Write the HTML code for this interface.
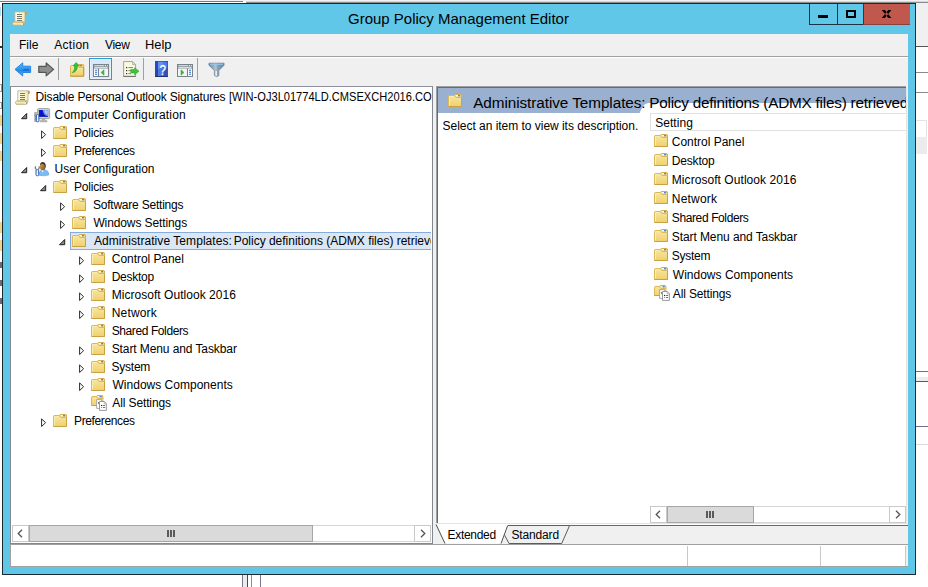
<!DOCTYPE html>
<html><head><meta charset="utf-8"><title>Group Policy Management Editor</title>
<style>
html,body{margin:0;padding:0}
body{width:928px;height:587px;overflow:hidden;background:#fff;position:relative;font-family:"Liberation Sans", sans-serif;font-size:12px;color:#000}
div,span,svg{position:absolute;box-sizing:border-box}
.ic{overflow:visible}
.t{white-space:nowrap;line-height:14px;height:14px;transform-origin:0 0}
.sep{width:1px;background:#a0a0a0}
</style></head><body>
<svg width="0" height="0" style="left:0;top:0"><defs>
<linearGradient id="fg" x1="0" y1="0" x2="0" y2="1"><stop offset="0" stop-color="#f8e6a0"/><stop offset="1" stop-color="#efd06c"/></linearGradient>
<linearGradient id="sg" x1="0" y1="0" x2="1" y2="0"><stop offset="0" stop-color="#fffde6"/><stop offset="1" stop-color="#f6eaa6"/></linearGradient>
<linearGradient id="ug" x1="0" y1="0" x2="1" y2="1"><stop offset="0" stop-color="#d8ac58"/><stop offset="1" stop-color="#7c4c1c"/></linearGradient>
</defs></svg>

<div style="left:0;top:0;width:928px;height:1px;background:#f2f2f2"></div>
<div style="left:0;top:1px;width:243px;height:1px;background:#77778f"></div>
<div style="left:246px;top:1px;width:682px;height:1px;background:#d8d8d8"></div>
<div style="left:246px;top:2px;width:682px;height:1px;background:#8c8c8c"></div>
<div style="left:916px;top:3px;width:12px;height:43px;background:#f0f0f0"></div>
<div style="left:916px;top:46px;width:12px;height:1px;background:#555"></div>
<div style="left:916px;top:72px;width:12px;height:1px;background:#8a8a8a"></div>
<div style="left:916px;top:92px;width:12px;height:1px;background:#8a8a8a"></div>
<div style="left:916px;top:120px;width:11px;height:34px;background:#fff;border:1px solid #e3e3e3;border-left:0"></div>
<div style="left:916px;top:137px;width:11px;height:17px;background:#ececec"></div>
<div style="left:916px;top:371px;width:12px;height:1px;background:#6f6f88"></div>
<div style="left:916px;top:377px;width:12px;height:4px;background:#ededed"></div>
<div style="left:916px;top:381px;width:12px;height:1px;background:#5a5a5a"></div>
<div style="left:916px;top:426px;width:12px;height:1px;background:#6f6f88"></div>
<div style="left:916px;top:444px;width:12px;height:1px;background:#dcdcdc"></div>
<div style="left:242px;top:575px;width:1px;height:12px;background:#77778f"></div>
<div style="left:243px;top:575px;width:4px;height:12px;background:#ececec"></div>
<div style="left:247px;top:575px;width:1px;height:12px;background:#4a4a4a"></div>
<div style="left:251px;top:575px;width:1px;height:12px;background:#8c8c8c"></div>
<div style="left:260px;top:575px;width:1px;height:12px;background:#77778f"></div>
<div style="left:0;top:115px;width:2px;height:11px;background:#efd48a"></div>
<div style="left:0;top:133px;width:2px;height:11px;background:#efd48a"></div>
<div style="left:0;top:151px;width:2px;height:10px;background:#efd48a"></div>
<div style="left:0;top:222px;width:2px;height:11px;background:#efd48a"></div>
<div style="left:0;top:240px;width:2px;height:11px;background:#efd48a"></div>
<div style="left:0;top:262px;width:2px;height:6px;background:#6a6a78"></div>
<div style="left:0;top:280px;width:2px;height:6px;background:#6a6a78"></div>
<div style="left:0;top:298px;width:2px;height:6px;background:#6a6a78"></div>
<div style="left:0;top:84px;width:2px;height:8px;border:1px solid #9a9a9a;border-left:0"></div>
<div style="left:0;top:102px;width:2px;height:7px;border:1px solid #9a9a9a;border-left:0"></div>
<div style="left:0;top:7px;width:1px;height:9px;background:#a8dcf4"></div>
<div style="left:0;top:46px;width:2px;height:2px;background:#333"></div>
<div id="win" style="left:2px;top:3px;width:914px;height:572px;background:#60c7e8;border:1px solid #1d2a33"></div>
<svg class="ic" style="left:12px;top:11px" width="15" height="15" viewBox="0 0 15 15">
<path d="M2.8 .8 H13.6 Q15.2 1 14.4 3 L13 4.4 V11.2 H2.8Z" fill="url(#sg)" stroke="#a9a9a0" stroke-width=".8"/>
<path d="M12.6 1 Q15.4 .6 14.4 3.2 L13 4.4Z" fill="#c89a48"/>
<path d="M1.2 11 Q-.4 12.8 1.4 14.4 H10.5 Q12.6 14.2 12.6 11.6 L12.4 11 H3 Z" fill="#f8efbf" stroke="#b7a877" stroke-width=".8"/>
<path d="M1 13.3 H9" stroke="#efcf7e" stroke-width=".9"/>
<path d="M3 11.4 H12.4" stroke="#dcc07a" stroke-width=".8"/>
<path d="M10.3 11.4 Q12.3 12 11.6 14.2" fill="none" stroke="#8c8c8c" stroke-width=".8"/>
<path d="M5 3.5H10M5 5.5H10M5 7.5H10M5 9.5H10" stroke="#767676" stroke-width="1"/>
</svg>
<span class="t" style="left:348.00px;top:10px;font-size:15px;line-height:18px;height:18px;">Group Policy Management Editor</span>
<div style="left:809px;top:4px;width:55px;height:21px;border:1px solid #1d3540;border-top:0;border-right:0"></div>
<div style="left:837px;top:4px;width:1px;height:20px;background:#1d3540"></div>
<div style="left:863px;top:4px;width:47px;height:21px;background:#c1584e;border-left:1px solid #5a2a26;border-bottom:1px solid #8e3f39"></div>
<div style="left:818px;top:15px;width:10px;height:3px;background:#000"></div>
<div style="left:846px;top:10px;width:10px;height:8px;border:2px solid #000;border-top-width:2px"></div>
<svg class="ic" style="left:881px;top:10px" width="11" height="9" viewBox="0 0 11 9"><path d="M.8 0 H3.9 L10.4 8 H7.3Z M10.4 0 H7.3 L.8 8 H3.9Z" fill="#000"/></svg>
<div id="client" style="left:10px;top:34px;width:898px;height:533px;background:#f0f0f0"></div>
<span class="t" style="left:19.00px;top:38px;">File</span>
<span class="t" style="left:54.20px;top:38px;letter-spacing:0.300px;">Action</span>
<span class="t" style="left:105.00px;top:38px;letter-spacing:-0.333px;">View</span>
<span class="t" style="left:144.93px;top:38px;transform:scaleX(1.0739);">Help</span>
<div style="left:10px;top:56px;width:898px;height:1px;background:#a0a0a0"></div>
<div style="left:10px;top:57px;width:898px;height:1px;background:#fff"></div>
<svg class="ic" style="left:14px;top:62px" width="18" height="15" viewBox="0 0 18 15">
<defs><linearGradient id="ba" x1="0" y1="0" x2="0" y2="1"><stop offset="0" stop-color="#58b8f6"/><stop offset=".45" stop-color="#2c9cf0"/><stop offset=".55" stop-color="#2488e6"/><stop offset="1" stop-color="#4cb2f6"/></linearGradient></defs>
<path d="M1 7.4 L8.7 .8 V4.2 H16.6 V10.5 H8.7 V14Z" fill="url(#ba)" stroke="#2a86e2" stroke-width="1" stroke-linejoin="round"/>
<path d="M10 6.8 H15 V9 H8.5Z" fill="#1466d8" opacity=".75"/></svg>
<svg class="ic" style="left:38px;top:62px" width="17" height="15" viewBox="0 0 17 15">
<path d="M15.6 7.4 L8.2 .9 V4.3 H.8 V10.4 H8.2 V13.9Z" fill="#8a9090" stroke="#545454" stroke-width="1.2" stroke-linejoin="round"/></svg>
<div class="sep" style="left:58px;top:58px;height:22px"></div>
<svg class="ic" style="left:70px;top:62px" width="15" height="15" viewBox="0 0 15 15">
<path d="M8 3.2 L8.7 2.5 H13.2 L13.7 3 V6 H8Z" fill="#f2d98c" stroke="#d6ae50"/>
<rect x="9.6" y="3" width="2.2" height="1.2" fill="#3d8fe6"/>
<path d="M.5 4 L1 3.5 H7.6 L9 5.2 H13.7 V14.2 H.5Z" fill="url(#fg)" stroke="#d9b656"/>
<path d="M.5 14.2 H13.7 V5.5" fill="none" stroke="#c39a3e"/>
<path d="M2.3 10.6 Q3.6 9.6 4.4 7.4 Q4.9 5.6 4.4 4.2 L3.2 3.6 L6.2 .5 L8.8 3.6 L7.4 3.7 Q7.6 6.4 6.2 8.4 Q4.8 10.4 2.3 10.6Z" fill="#34c234" stroke="#1f9a24" stroke-width=".6"/></svg>
<div style="left:89px;top:58px;width:23.4px;height:22px;background:#d9e8f8;border:1px solid #2a9ad8;box-shadow:inset 0 0 0 1px #e6f1fb"></div>
<svg class="ic" style="left:93px;top:64px" width="16" height="13" viewBox="0 0 16 13">
<rect x=".5" y=".5" width="15" height="12" fill="#fff" stroke="#76858c"/>
<rect x="1" y="1" width="14" height="3.6" fill="#8e9aa0"/>
<path d="M1.5 1.7H11" stroke="#e8ecee" stroke-width=".9"/><path d="M1.5 3.6H14.5" stroke="#e8ecee" stroke-width=".9"/>
<path d="M12 1.7h1M14 1.7h.8" stroke="#fff" stroke-width="1"/>
<path d="M5.6 4.6V12.5" stroke="#76858c" stroke-width="1.2"/>
<path d="M2 6.2h2.2M2 8.2h2.2M2 10.2h2.2" stroke="#2f6fe0" stroke-width="1.1"/>
<rect x="6.3" y="5" width="8.7" height="7" fill="#f4f4f4"/>
<path d="M11 5.8 V11.2 L8 8.5Z" fill="#3cc03c" stroke="#2a9a2a" stroke-width=".5"/></svg>
<svg class="ic" style="left:123px;top:61px" width="17" height="16" viewBox="0 0 17 16">
<path d="M.6 .6 H9.6 L12.6 3.6 V15.4 H.6Z" fill="#fbfadc" stroke="#a2a2a2"/>
<path d="M.4 15.4 H12.8" stroke="#6e6e6e" stroke-width="1"/>
<path d="M9.6 .6 V3.6 H12.6Z" fill="#f0f0e8" stroke="#a2a2a2" stroke-width=".8"/>
<rect x="3" y="6" width="1.2" height="1.2" fill="#2a2a3a"/><rect x="3" y="9" width="1.2" height="1.2" fill="#2a2a3a"/><rect x="3" y="12" width="1.2" height="1.2" fill="#2a2a3a"/>
<path d="M5.4 6.6H10M5.4 9.6H8M5.4 12.6H8" stroke="#7a8088" stroke-width="1"/>
<path d="M7.8 8.6 H11.6 V6.7 L16 10.2 L11.6 13.8 V11.9 H7.8Z" fill="#3cc43c" stroke="#2aa82a" stroke-width=".6"/></svg>
<div class="sep" style="left:143px;top:58px;height:22px"></div>
<svg class="ic" style="left:155px;top:61px" width="13" height="16" viewBox="0 0 13 16">
<rect x="0" y="0" width="13" height="16" fill="#2448d0"/>
<rect x="0" y="9" width="3" height="7" fill="#34468c"/>
<rect x="3" y=".8" width="9.4" height="14.4" fill="#4a78e4"/>
<path d="M3 .8 H9 L3 9Z" fill="#6c98ec" opacity=".8"/>
<path d="M12.4 6 V15.2 H6Z" fill="#3444a4" opacity=".8"/>
<rect x="0" y="15.2" width="13" height=".8" fill="#1c2c6c"/>
<text x="7.6" y="13.6" font-family="Liberation Sans, sans-serif" font-size="15" fill="#fff" stroke="#fff" stroke-width=".3" text-anchor="middle" textLength="6.4" lengthAdjust="spacingAndGlyphs">?</text></svg>
<svg class="ic" style="left:177px;top:64px" width="16" height="13" viewBox="0 0 16 13">
<rect x=".5" y=".5" width="15" height="12" fill="#fff" stroke="#76858c"/>
<rect x="1" y="1" width="14" height="3.6" fill="#8e9aa0"/>
<path d="M1.5 1.7H11" stroke="#e8ecee" stroke-width=".9"/><path d="M1.5 3.6H14.5" stroke="#e8ecee" stroke-width=".9"/>
<path d="M12 1.7h1M14 1.7h.8" stroke="#fff" stroke-width="1"/>
<path d="M10.4 4.6V12.5" stroke="#76858c" stroke-width="1.2"/>
<path d="M11.9 6.2h2.2M11.9 8.2h2.2M11.9 10.2h2.2" stroke="#2f6fe0" stroke-width="1.1"/>
<rect x="1" y="5" width="8.7" height="7" fill="#f4f4f4"/>
<path d="M4 5.8 V11.2 L7 8.5Z" fill="#3cc03c" stroke="#2a9a2a" stroke-width=".5"/></svg>
<div class="sep" style="left:197px;top:58px;height:22px"></div>
<svg class="ic" style="left:208px;top:62px" width="17" height="16" viewBox="0 0 17 16">
<defs><linearGradient id="fu" x1="0" y1="0" x2="1" y2="0"><stop offset="0" stop-color="#6f879f"/><stop offset=".45" stop-color="#b4c2d0"/><stop offset=".6" stop-color="#8a9db2"/><stop offset="1" stop-color="#6b8299"/></linearGradient></defs>
<path d="M.9 1.2 H16.1 V3.2 L10.8 8.6 V13.6 Q8.6 15.6 6.4 13.6 V8.6 L.9 3.2Z" fill="url(#fu)" stroke="#6a8098" stroke-width=".7"/>
<path d="M2 2.3 H15" stroke="#8fd0f4" stroke-width=".9"/>
<path d="M8.2 9 V13.8" stroke="#f2f6fa" stroke-width="1.3"/></svg>
<div id="tree" style="left:10px;top:86px;width:423px;height:458px;background:#fff;border:1px solid #828790;border-top-color:#8e8f9f;overflow:hidden"></div>
<div style="left:70px;top:232px;width:361px;height:18px;background:#dbe7f5;border:1px solid #86abdc;border-right:0"></div>
<svg class="ic" style="left:15px;top:90px" width="15" height="15" viewBox="0 0 15 15">
<path d="M2.8 .8 H13.6 Q15.2 1 14.4 3 L13 4.4 V11.2 H2.8Z" fill="url(#sg)" stroke="#a9a9a0" stroke-width=".8"/>
<path d="M12.6 1 Q15.4 .6 14.4 3.2 L13 4.4Z" fill="#c89a48"/>
<path d="M1.2 11 Q-.4 12.8 1.4 14.4 H10.5 Q12.6 14.2 12.6 11.6 L12.4 11 H3 Z" fill="#f8efbf" stroke="#b7a877" stroke-width=".8"/>
<path d="M1 13.3 H9" stroke="#efcf7e" stroke-width=".9"/>
<path d="M3 11.4 H12.4" stroke="#dcc07a" stroke-width=".8"/>
<path d="M10.3 11.4 Q12.3 12 11.6 14.2" fill="none" stroke="#8c8c8c" stroke-width=".8"/>
<path d="M5 3.5H10M5 5.5H10M5 7.5H10M5 9.5H10" stroke="#767676" stroke-width="1"/>
</svg>
<span class="t" style="left:35.60px;top:90px;letter-spacing:-0.182px;">Disable Personal Outlook Signatures</span>
<span class="t" style="left:228.78px;top:90px;width:220.08px;overflow:hidden;transform:scaleX(0.9234);">[WIN-OJ3L01774LD.CMSEXCH2016.CO</span>
<svg class="ic" style="left:20.7px;top:112.7px" width="7" height="7" viewBox="0 0 7 7"><path d="M5.7 .5 V5.7 H.5Z" fill="#8a8a8a" stroke="#222" stroke-width="1" stroke-linejoin="miter"/></svg>
<svg class="ic" style="left:34px;top:108px" width="16" height="14" viewBox="0 0 16 14">
<rect x="3.6" y=".6" width="12" height="10" rx="1" fill="#d7d6ce" stroke="#a3a39c"/>
<rect x="4.9" y="2" width="9.2" height="6.9" fill="#0a14c4"/>
<path d="M8.6 2 H14.1 V8.2 Q10 8.6 8.6 2Z" fill="#6f9af0"/>
<path d="M10.4 2.6 H13.6 V6.6 Q11.4 6.4 10.4 2.6Z" fill="#b4d0fa"/>
<path d="M8 10.6 h3 l.6 2 h-4.2Z" fill="#b3b3b0"/>
<rect x="5.8" y="12.4" width="7.4" height="1.5" rx=".6" fill="#c2c2be" stroke="#95958f" stroke-width=".5"/>
<rect x=".3" y="4.2" width="3.2" height="9.6" fill="#a2a2a0"/>
<path d="M2.2 4.3 L3.4 5.8 L4.8 4.3 L4.4 6.6 H2.4Z" fill="#f4f4f4" stroke="#9c9c9c" stroke-width=".4"/>
<rect x="2.3" y="6.6" width="2.6" height="7.2" rx="1.2" fill="#f2f6fc" stroke="#2a58b4" stroke-width="1"/>
<rect x=".4" y="7" width=".9" height=".9" fill="#49c04a"/>
</svg>
<span class="t" style="left:54.60px;top:108px;letter-spacing:0.176px;">Computer Configuration</span>
<svg class="ic" style="left:40.9px;top:129.8px" width="6" height="10" viewBox="0 0 6 10"><path d="M.6 .9 L4.6 4.7 L.6 8.5Z" fill="#fff" stroke="#2b2b2b" stroke-width="1"/></svg>
<svg class="ic" style="left:53px;top:126px" width="14" height="13" viewBox="0 0 14 13">
<path d="M6.5 1.2 L7.2 .5 H13 L13.5 1 V4 H6.5Z" fill="#f2d98c" stroke="#d6ae50"/>
<rect x="7.7" y="1" width="2.3" height="1.3" fill="#fff"/><rect x="10" y="1" width="2.1" height="1.3" fill="#3d8fe6"/>
<path d="M.5 2 L1 1.5 H6.3 L8 3.5 H13.5 V12.5 H.5Z" fill="url(#fg)" stroke="#dab95c"/>
<path d="M.5 12.5 H13.5 V4" fill="none" stroke="#c9a044"/>
<path d="M1.5 11.5 V2.6 H5.8" fill="none" stroke="#fbefb6" stroke-width=".9"/>
</svg>
<span class="t" style="left:74.00px;top:126px;letter-spacing:-0.214px;">Policies</span>
<svg class="ic" style="left:40.9px;top:147.8px" width="6" height="10" viewBox="0 0 6 10"><path d="M.6 .9 L4.6 4.7 L.6 8.5Z" fill="#fff" stroke="#2b2b2b" stroke-width="1"/></svg>
<svg class="ic" style="left:53px;top:144px" width="14" height="13" viewBox="0 0 14 13">
<path d="M6.5 1.2 L7.2 .5 H13 L13.5 1 V4 H6.5Z" fill="#f2d98c" stroke="#d6ae50"/>
<rect x="7.7" y="1" width="2.3" height="1.3" fill="#fff"/><rect x="10" y="1" width="2.1" height="1.3" fill="#3d8fe6"/>
<path d="M.5 2 L1 1.5 H6.3 L8 3.5 H13.5 V12.5 H.5Z" fill="url(#fg)" stroke="#dab95c"/>
<path d="M.5 12.5 H13.5 V4" fill="none" stroke="#c9a044"/>
<path d="M1.5 11.5 V2.6 H5.8" fill="none" stroke="#fbefb6" stroke-width=".9"/>
</svg>
<span class="t" style="left:74.00px;top:144px;letter-spacing:-0.370px;">Preferences</span>
<svg class="ic" style="left:20.7px;top:166.7px" width="7" height="7" viewBox="0 0 7 7"><path d="M5.7 .5 V5.7 H.5Z" fill="#8a8a8a" stroke="#222" stroke-width="1" stroke-linejoin="miter"/></svg>
<svg class="ic" style="left:34px;top:162px" width="15" height="14" viewBox="0 0 15 14">
<path d="M5.4 13.4 Q5 8 9 7.6 Q15 8 14.8 13 Q10 14.4 5.4 13.4Z" fill="#7dbcf2" stroke="#5e9fe0" stroke-width=".6"/>
<path d="M7.4 8.2 L8.6 10.4 L10 8Z" fill="#fff"/>
<ellipse cx="8.7" cy="4.4" rx="2.8" ry="3.9" fill="url(#ug)"/>
<path d="M6 3.4 Q6.2 .1 9 .1 Q12.2 .4 11.6 5.2 Q11 6.6 10.9 4.6 Q10.6 2 8.8 2 Q6.8 1.9 6 3.4Z" fill="#3a3a3c"/>
<path d="M1.6 4.3 Q.6 6.4 2.6 7.8 M5 4.3 Q6 6.4 4 7.8" fill="none" stroke="#7d7d7d" stroke-width="1.2"/>
<rect x="2" y="7.6" width="2.7" height="6.2" rx="1.2" fill="#f2f6fc" stroke="#2a58b4" stroke-width="1"/>
</svg>
<span class="t" style="left:54.60px;top:162px;letter-spacing:-0.006px;">User Configuration</span>
<svg class="ic" style="left:39.7px;top:184.7px" width="7" height="7" viewBox="0 0 7 7"><path d="M5.7 .5 V5.7 H.5Z" fill="#8a8a8a" stroke="#222" stroke-width="1" stroke-linejoin="miter"/></svg>
<svg class="ic" style="left:53px;top:180px" width="14" height="13" viewBox="0 0 14 13">
<path d="M6.5 1.2 L7.2 .5 H13 L13.5 1 V4 H6.5Z" fill="#f2d98c" stroke="#d6ae50"/>
<rect x="7.7" y="1" width="2.3" height="1.3" fill="#fff"/><rect x="10" y="1" width="2.1" height="1.3" fill="#3d8fe6"/>
<path d="M.5 2 L1 1.5 H6.3 L8 3.5 H13.5 V12.5 H.5Z" fill="url(#fg)" stroke="#dab95c"/>
<path d="M.5 12.5 H13.5 V4" fill="none" stroke="#c9a044"/>
<path d="M1.5 11.5 V2.6 H5.8" fill="none" stroke="#fbefb6" stroke-width=".9"/>
</svg>
<span class="t" style="left:74.00px;top:180px;letter-spacing:-0.214px;">Policies</span>
<svg class="ic" style="left:59.9px;top:201.8px" width="6" height="10" viewBox="0 0 6 10"><path d="M.6 .9 L4.6 4.7 L.6 8.5Z" fill="#fff" stroke="#2b2b2b" stroke-width="1"/></svg>
<svg class="ic" style="left:72px;top:198px" width="14" height="13" viewBox="0 0 14 13">
<path d="M6.5 1.2 L7.2 .5 H13 L13.5 1 V4 H6.5Z" fill="#f2d98c" stroke="#d6ae50"/>
<rect x="7.7" y="1" width="2.3" height="1.3" fill="#fff"/><rect x="10" y="1" width="2.1" height="1.3" fill="#3d8fe6"/>
<path d="M.5 2 L1 1.5 H6.3 L8 3.5 H13.5 V12.5 H.5Z" fill="url(#fg)" stroke="#dab95c"/>
<path d="M.5 12.5 H13.5 V4" fill="none" stroke="#c9a044"/>
<path d="M1.5 11.5 V2.6 H5.8" fill="none" stroke="#fbefb6" stroke-width=".9"/>
</svg>
<span class="t" style="left:92.90px;top:198px;letter-spacing:-0.213px;">Software Settings</span>
<svg class="ic" style="left:59.9px;top:219.8px" width="6" height="10" viewBox="0 0 6 10"><path d="M.6 .9 L4.6 4.7 L.6 8.5Z" fill="#fff" stroke="#2b2b2b" stroke-width="1"/></svg>
<svg class="ic" style="left:72px;top:216px" width="14" height="13" viewBox="0 0 14 13">
<path d="M6.5 1.2 L7.2 .5 H13 L13.5 1 V4 H6.5Z" fill="#f2d98c" stroke="#d6ae50"/>
<rect x="7.7" y="1" width="2.3" height="1.3" fill="#fff"/><rect x="10" y="1" width="2.1" height="1.3" fill="#3d8fe6"/>
<path d="M.5 2 L1 1.5 H6.3 L8 3.5 H13.5 V12.5 H.5Z" fill="url(#fg)" stroke="#dab95c"/>
<path d="M.5 12.5 H13.5 V4" fill="none" stroke="#c9a044"/>
<path d="M1.5 11.5 V2.6 H5.8" fill="none" stroke="#fbefb6" stroke-width=".9"/>
</svg>
<span class="t" style="left:93.40px;top:216px;letter-spacing:-0.107px;">Windows Settings</span>
<svg class="ic" style="left:58.7px;top:238.7px" width="7" height="7" viewBox="0 0 7 7"><path d="M5.7 .5 V5.7 H.5Z" fill="#8a8a8a" stroke="#222" stroke-width="1" stroke-linejoin="miter"/></svg>
<svg class="ic" style="left:72px;top:234px" width="14" height="13" viewBox="0 0 14 13">
<path d="M6.5 1.2 L7.2 .5 H13 L13.5 1 V4 H6.5Z" fill="#f2d98c" stroke="#d6ae50"/>
<rect x="7.7" y="1" width="2.3" height="1.3" fill="#fff"/><rect x="10" y="1" width="2.1" height="1.3" fill="#3d8fe6"/>
<path d="M.5 2 L1 1.5 H6.3 L8 3.5 H13.5 V12.5 H.5Z" fill="url(#fg)" stroke="#dab95c"/>
<path d="M.5 12.5 H13.5 V4" fill="none" stroke="#c9a044"/>
<path d="M1.5 11.5 V2.6 H5.8" fill="none" stroke="#fbefb6" stroke-width=".9"/>
</svg>
<span class="t" style="left:93.90px;top:234px;letter-spacing:0.062px;">Administrative Templates:</span>
<span class="t" style="left:233.70px;top:234px;letter-spacing:-0.011px;width:197.30px;overflow:hidden;">Policy definitions (ADMX files) retrieved</span>
<svg class="ic" style="left:78.9px;top:255.8px" width="6" height="10" viewBox="0 0 6 10"><path d="M.6 .9 L4.6 4.7 L.6 8.5Z" fill="#fff" stroke="#2b2b2b" stroke-width="1"/></svg>
<svg class="ic" style="left:91px;top:252px" width="14" height="13" viewBox="0 0 14 13">
<path d="M6.5 1.2 L7.2 .5 H13 L13.5 1 V4 H6.5Z" fill="#f2d98c" stroke="#d6ae50"/>
<rect x="7.7" y="1" width="2.3" height="1.3" fill="#fff"/><rect x="10" y="1" width="2.1" height="1.3" fill="#3d8fe6"/>
<path d="M.5 2 L1 1.5 H6.3 L8 3.5 H13.5 V12.5 H.5Z" fill="url(#fg)" stroke="#dab95c"/>
<path d="M.5 12.5 H13.5 V4" fill="none" stroke="#c9a044"/>
<path d="M1.5 11.5 V2.6 H5.8" fill="none" stroke="#fbefb6" stroke-width=".9"/>
</svg>
<span class="t" style="left:111.80px;top:252px;letter-spacing:-0.050px;">Control Panel</span>
<svg class="ic" style="left:78.9px;top:273.8px" width="6" height="10" viewBox="0 0 6 10"><path d="M.6 .9 L4.6 4.7 L.6 8.5Z" fill="#fff" stroke="#2b2b2b" stroke-width="1"/></svg>
<svg class="ic" style="left:91px;top:270px" width="14" height="13" viewBox="0 0 14 13">
<path d="M6.5 1.2 L7.2 .5 H13 L13.5 1 V4 H6.5Z" fill="#f2d98c" stroke="#d6ae50"/>
<rect x="7.7" y="1" width="2.3" height="1.3" fill="#fff"/><rect x="10" y="1" width="2.1" height="1.3" fill="#3d8fe6"/>
<path d="M.5 2 L1 1.5 H6.3 L8 3.5 H13.5 V12.5 H.5Z" fill="url(#fg)" stroke="#dab95c"/>
<path d="M.5 12.5 H13.5 V4" fill="none" stroke="#c9a044"/>
<path d="M1.5 11.5 V2.6 H5.8" fill="none" stroke="#fbefb6" stroke-width=".9"/>
</svg>
<span class="t" style="left:111.70px;top:270px;letter-spacing:-0.250px;">Desktop</span>
<svg class="ic" style="left:78.9px;top:291.8px" width="6" height="10" viewBox="0 0 6 10"><path d="M.6 .9 L4.6 4.7 L.6 8.5Z" fill="#fff" stroke="#2b2b2b" stroke-width="1"/></svg>
<svg class="ic" style="left:91px;top:288px" width="14" height="13" viewBox="0 0 14 13">
<path d="M6.5 1.2 L7.2 .5 H13 L13.5 1 V4 H6.5Z" fill="#f2d98c" stroke="#d6ae50"/>
<rect x="7.7" y="1" width="2.3" height="1.3" fill="#fff"/><rect x="10" y="1" width="2.1" height="1.3" fill="#3d8fe6"/>
<path d="M.5 2 L1 1.5 H6.3 L8 3.5 H13.5 V12.5 H.5Z" fill="url(#fg)" stroke="#dab95c"/>
<path d="M.5 12.5 H13.5 V4" fill="none" stroke="#c9a044"/>
<path d="M1.5 11.5 V2.6 H5.8" fill="none" stroke="#fbefb6" stroke-width=".9"/>
</svg>
<span class="t" style="left:111.70px;top:288px;letter-spacing:0.038px;">Microsoft Outlook 2016</span>
<svg class="ic" style="left:78.9px;top:309.8px" width="6" height="10" viewBox="0 0 6 10"><path d="M.6 .9 L4.6 4.7 L.6 8.5Z" fill="#fff" stroke="#2b2b2b" stroke-width="1"/></svg>
<svg class="ic" style="left:91px;top:306px" width="14" height="13" viewBox="0 0 14 13">
<path d="M6.5 1.2 L7.2 .5 H13 L13.5 1 V4 H6.5Z" fill="#f2d98c" stroke="#d6ae50"/>
<rect x="7.7" y="1" width="2.3" height="1.3" fill="#fff"/><rect x="10" y="1" width="2.1" height="1.3" fill="#3d8fe6"/>
<path d="M.5 2 L1 1.5 H6.3 L8 3.5 H13.5 V12.5 H.5Z" fill="url(#fg)" stroke="#dab95c"/>
<path d="M.5 12.5 H13.5 V4" fill="none" stroke="#c9a044"/>
<path d="M1.5 11.5 V2.6 H5.8" fill="none" stroke="#fbefb6" stroke-width=".9"/>
</svg>
<span class="t" style="left:111.70px;top:306px;letter-spacing:0.183px;">Network</span>
<svg class="ic" style="left:91px;top:324px" width="14" height="13" viewBox="0 0 14 13">
<path d="M6.5 1.2 L7.2 .5 H13 L13.5 1 V4 H6.5Z" fill="#f2d98c" stroke="#d6ae50"/>
<rect x="7.7" y="1" width="2.3" height="1.3" fill="#fff"/><rect x="10" y="1" width="2.1" height="1.3" fill="#3d8fe6"/>
<path d="M.5 2 L1 1.5 H6.3 L8 3.5 H13.5 V12.5 H.5Z" fill="url(#fg)" stroke="#dab95c"/>
<path d="M.5 12.5 H13.5 V4" fill="none" stroke="#c9a044"/>
<path d="M1.5 11.5 V2.6 H5.8" fill="none" stroke="#fbefb6" stroke-width=".9"/>
</svg>
<span class="t" style="left:111.70px;top:324px;letter-spacing:-0.400px;">Shared Folders</span>
<svg class="ic" style="left:78.9px;top:345.8px" width="6" height="10" viewBox="0 0 6 10"><path d="M.6 .9 L4.6 4.7 L.6 8.5Z" fill="#fff" stroke="#2b2b2b" stroke-width="1"/></svg>
<svg class="ic" style="left:91px;top:342px" width="14" height="13" viewBox="0 0 14 13">
<path d="M6.5 1.2 L7.2 .5 H13 L13.5 1 V4 H6.5Z" fill="#f2d98c" stroke="#d6ae50"/>
<rect x="7.7" y="1" width="2.3" height="1.3" fill="#fff"/><rect x="10" y="1" width="2.1" height="1.3" fill="#3d8fe6"/>
<path d="M.5 2 L1 1.5 H6.3 L8 3.5 H13.5 V12.5 H.5Z" fill="url(#fg)" stroke="#dab95c"/>
<path d="M.5 12.5 H13.5 V4" fill="none" stroke="#c9a044"/>
<path d="M1.5 11.5 V2.6 H5.8" fill="none" stroke="#fbefb6" stroke-width=".9"/>
</svg>
<span class="t" style="left:111.70px;top:342px;letter-spacing:-0.095px;">Start Menu and Taskbar</span>
<svg class="ic" style="left:78.9px;top:363.8px" width="6" height="10" viewBox="0 0 6 10"><path d="M.6 .9 L4.6 4.7 L.6 8.5Z" fill="#fff" stroke="#2b2b2b" stroke-width="1"/></svg>
<svg class="ic" style="left:91px;top:360px" width="14" height="13" viewBox="0 0 14 13">
<path d="M6.5 1.2 L7.2 .5 H13 L13.5 1 V4 H6.5Z" fill="#f2d98c" stroke="#d6ae50"/>
<rect x="7.7" y="1" width="2.3" height="1.3" fill="#fff"/><rect x="10" y="1" width="2.1" height="1.3" fill="#3d8fe6"/>
<path d="M.5 2 L1 1.5 H6.3 L8 3.5 H13.5 V12.5 H.5Z" fill="url(#fg)" stroke="#dab95c"/>
<path d="M.5 12.5 H13.5 V4" fill="none" stroke="#c9a044"/>
<path d="M1.5 11.5 V2.6 H5.8" fill="none" stroke="#fbefb6" stroke-width=".9"/>
</svg>
<span class="t" style="left:111.50px;top:360px;letter-spacing:-0.240px;">System</span>
<svg class="ic" style="left:78.9px;top:381.8px" width="6" height="10" viewBox="0 0 6 10"><path d="M.6 .9 L4.6 4.7 L.6 8.5Z" fill="#fff" stroke="#2b2b2b" stroke-width="1"/></svg>
<svg class="ic" style="left:91px;top:378px" width="14" height="13" viewBox="0 0 14 13">
<path d="M6.5 1.2 L7.2 .5 H13 L13.5 1 V4 H6.5Z" fill="#f2d98c" stroke="#d6ae50"/>
<rect x="7.7" y="1" width="2.3" height="1.3" fill="#fff"/><rect x="10" y="1" width="2.1" height="1.3" fill="#3d8fe6"/>
<path d="M.5 2 L1 1.5 H6.3 L8 3.5 H13.5 V12.5 H.5Z" fill="url(#fg)" stroke="#dab95c"/>
<path d="M.5 12.5 H13.5 V4" fill="none" stroke="#c9a044"/>
<path d="M1.5 11.5 V2.6 H5.8" fill="none" stroke="#fbefb6" stroke-width=".9"/>
</svg>
<span class="t" style="left:112.50px;top:378px;letter-spacing:0.012px;">Windows Components</span>
<svg class="ic" style="left:91px;top:395px" width="16" height="16" viewBox="0 0 16 16">
<path d="M5.5 1.2 L6.2 .5 H11.4 L11.9 1 V4 H5.5Z" fill="#f2d98c" stroke="#d6ae50"/>
<rect x="6.7" y="1" width="2" height="1.3" fill="#fff"/><rect x="8.6" y="1" width="2" height="1.3" fill="#3d8fe6"/>
<path d="M.5 2 L1 1.5 H5.3 L7 3.5 H11.9 V10.5 H.5Z" fill="url(#fg)" stroke="#dab95c"/>
<path d="M.5 10.5 H6" fill="none" stroke="#c9a044"/>
<path d="M5.6 4.6 H10.6 V13.4 H5.6Z" fill="#fcfcfc" stroke="#a2a2a2" stroke-width=".9"/>
<rect x="7" y="7.4" width="1.2" height="1.2" fill="#333"/>
<path d="M8.5 6.5 H13.4 L15.4 8.6 V15.4 H8.5Z" fill="#fff" stroke="#8f8f8f" stroke-width=".9"/>
<path d="M13.2 6.6 V8.8 H15.3" fill="#ededed" stroke="#9a9a9a" stroke-width=".7"/>
<rect x="10" y="9.9" width="1.2" height="1.2" fill="#222"/><rect x="10.1" y="12" width="1" height="1" fill="#8c8c8c"/>
<path d="M12 10.5H14.2M12 12.5H14.2" stroke="#5a7d7a" stroke-width="1"/>
</svg>
<span class="t" style="left:112.30px;top:396px;letter-spacing:-0.118px;">All Settings</span>
<svg class="ic" style="left:40.9px;top:417.8px" width="6" height="10" viewBox="0 0 6 10"><path d="M.6 .9 L4.6 4.7 L.6 8.5Z" fill="#fff" stroke="#2b2b2b" stroke-width="1"/></svg>
<svg class="ic" style="left:53px;top:414px" width="14" height="13" viewBox="0 0 14 13">
<path d="M6.5 1.2 L7.2 .5 H13 L13.5 1 V4 H6.5Z" fill="#f2d98c" stroke="#d6ae50"/>
<rect x="7.7" y="1" width="2.3" height="1.3" fill="#fff"/><rect x="10" y="1" width="2.1" height="1.3" fill="#3d8fe6"/>
<path d="M.5 2 L1 1.5 H6.3 L8 3.5 H13.5 V12.5 H.5Z" fill="url(#fg)" stroke="#dab95c"/>
<path d="M.5 12.5 H13.5 V4" fill="none" stroke="#c9a044"/>
<path d="M1.5 11.5 V2.6 H5.8" fill="none" stroke="#fbefb6" stroke-width=".9"/>
</svg>
<span class="t" style="left:74.00px;top:414px;letter-spacing:-0.370px;">Preferences</span>
<div style="left:12px;top:525px;width:419px;height:17px;background:#fff;border:1px solid #d6d6d6"></div><div style="left:12px;top:525px;width:17px;height:17px;background:#fff;border:1px solid #c9c9c9"></div><div style="left:414px;top:525px;width:17px;height:17px;background:#fff;border:1px solid #c9c9c9"></div><svg class="ic" style="left:17px;top:529px" width="6" height="9" viewBox="0 0 6 9"><path d="M5 .7 L1.2 4.5 L5 8.3" fill="none" stroke="#555" stroke-width="1.3"/></svg><svg class="ic" style="left:420px;top:529px" width="6" height="9" viewBox="0 0 6 9"><path d="M1 .7 L4.8 4.5 L1 8.3" fill="none" stroke="#555" stroke-width="1.3"/></svg><div style="left:29px;top:525px;width:284px;height:17px;background:#dadada;border:1px solid #a6a6a6"></div><div style="left:167px;top:530px;width:2px;height:7px;background:#5a5a5a"></div><div style="left:170px;top:530px;width:2px;height:7px;background:#5a5a5a"></div><div style="left:173px;top:530px;width:2px;height:7px;background:#5a5a5a"></div>
<div id="rp" style="left:436px;top:86px;width:470px;height:439px;background:#fff"></div>
<div style="left:436px;top:86px;width:1px;height:437px;background:#a0a0a0"></div>
<div style="left:437px;top:87px;width:1px;height:436px;background:#696969"></div>
<div style="left:436px;top:86px;width:470px;height:1px;background:#a0a0a0"></div>
<div style="left:437px;top:87px;width:469px;height:1px;background:#696969"></div>
<div style="left:906px;top:88px;width:1px;height:436px;background:#e3e3e3"></div>
<div style="left:437px;top:523px;width:470px;height:1px;background:#e3e3e3"></div>
<svg class="ic" style="left:438px;top:88px" width="468" height="26" viewBox="0 0 468 26">
<path d="M0 0 H468 V15 H210.5 C208 15.2 206 17 204.8 18.4 C203.8 20 203.4 21.5 202.6 22.6 C202.2 23.6 202 25 201.5 25 H0Z" fill="#99b0d0"/></svg>
<svg class="ic" style="left:448px;top:94px" width="14" height="13" viewBox="0 0 14 13">
<path d="M6.5 1.2 L7.2 .5 H13 L13.5 1 V4 H6.5Z" fill="#f2d98c" stroke="#d6ae50"/>
<rect x="7.7" y="1" width="2.3" height="1.3" fill="#fff"/><rect x="10" y="1" width="2.1" height="1.3" fill="#3d8fe6"/>
<path d="M.5 2 L1 1.5 H6.3 L8 3.5 H13.5 V12.5 H.5Z" fill="url(#fg)" stroke="#dab95c"/>
<path d="M.5 12.5 H13.5 V4" fill="none" stroke="#c9a044"/>
<path d="M1.5 11.5 V2.6 H5.8" fill="none" stroke="#fbefb6" stroke-width=".9"/>
</svg>
<span class="t" style="left:473.20px;top:93px;font-size:15.3px;line-height:20px;height:20px;letter-spacing:-0.067px;">Administrative Templates:</span>
<span class="t" style="left:649.20px;top:93px;font-size:15.3px;line-height:20px;height:20px;letter-spacing:-0.215px;width:256.80px;overflow:hidden;">Policy definitions (ADMX files) retrieved</span>
<span class="t" style="left:442.60px;top:119px;letter-spacing:-0.029px;">Select an item to view its description.</span>
<div style="left:650px;top:113px;width:256px;height:18px;background:#fff;border:1px solid #e0e0e0;border-right:0"></div>
<span class="t" style="left:655.20px;top:116px;letter-spacing:0.050px;">Setting</span>
<svg class="ic" style="left:654px;top:134px" width="14" height="13" viewBox="0 0 14 13">
<path d="M6.5 1.2 L7.2 .5 H13 L13.5 1 V4 H6.5Z" fill="#f2d98c" stroke="#d6ae50"/>
<rect x="7.7" y="1" width="2.3" height="1.3" fill="#fff"/><rect x="10" y="1" width="2.1" height="1.3" fill="#3d8fe6"/>
<path d="M.5 2 L1 1.5 H6.3 L8 3.5 H13.5 V12.5 H.5Z" fill="url(#fg)" stroke="#dab95c"/>
<path d="M.5 12.5 H13.5 V4" fill="none" stroke="#c9a044"/>
<path d="M1.5 11.5 V2.6 H5.8" fill="none" stroke="#fbefb6" stroke-width=".9"/>
</svg>
<span class="t" style="left:671.80px;top:135px;letter-spacing:-0.017px;">Control Panel</span>
<svg class="ic" style="left:654px;top:153px" width="14" height="13" viewBox="0 0 14 13">
<path d="M6.5 1.2 L7.2 .5 H13 L13.5 1 V4 H6.5Z" fill="#f2d98c" stroke="#d6ae50"/>
<rect x="7.7" y="1" width="2.3" height="1.3" fill="#fff"/><rect x="10" y="1" width="2.1" height="1.3" fill="#3d8fe6"/>
<path d="M.5 2 L1 1.5 H6.3 L8 3.5 H13.5 V12.5 H.5Z" fill="url(#fg)" stroke="#dab95c"/>
<path d="M.5 12.5 H13.5 V4" fill="none" stroke="#c9a044"/>
<path d="M1.5 11.5 V2.6 H5.8" fill="none" stroke="#fbefb6" stroke-width=".9"/>
</svg>
<span class="t" style="left:671.80px;top:154px;letter-spacing:-0.183px;">Desktop</span>
<svg class="ic" style="left:654px;top:172px" width="14" height="13" viewBox="0 0 14 13">
<path d="M6.5 1.2 L7.2 .5 H13 L13.5 1 V4 H6.5Z" fill="#f2d98c" stroke="#d6ae50"/>
<rect x="7.7" y="1" width="2.3" height="1.3" fill="#fff"/><rect x="10" y="1" width="2.1" height="1.3" fill="#3d8fe6"/>
<path d="M.5 2 L1 1.5 H6.3 L8 3.5 H13.5 V12.5 H.5Z" fill="url(#fg)" stroke="#dab95c"/>
<path d="M.5 12.5 H13.5 V4" fill="none" stroke="#c9a044"/>
<path d="M1.5 11.5 V2.6 H5.8" fill="none" stroke="#fbefb6" stroke-width=".9"/>
</svg>
<span class="t" style="left:671.80px;top:173px;letter-spacing:0.057px;">Microsoft Outlook 2016</span>
<svg class="ic" style="left:654px;top:191px" width="14" height="13" viewBox="0 0 14 13">
<path d="M6.5 1.2 L7.2 .5 H13 L13.5 1 V4 H6.5Z" fill="#f2d98c" stroke="#d6ae50"/>
<rect x="7.7" y="1" width="2.3" height="1.3" fill="#fff"/><rect x="10" y="1" width="2.1" height="1.3" fill="#3d8fe6"/>
<path d="M.5 2 L1 1.5 H6.3 L8 3.5 H13.5 V12.5 H.5Z" fill="url(#fg)" stroke="#dab95c"/>
<path d="M.5 12.5 H13.5 V4" fill="none" stroke="#c9a044"/>
<path d="M1.5 11.5 V2.6 H5.8" fill="none" stroke="#fbefb6" stroke-width=".9"/>
</svg>
<span class="t" style="left:671.80px;top:192px;letter-spacing:0.200px;">Network</span>
<svg class="ic" style="left:654px;top:210px" width="14" height="13" viewBox="0 0 14 13">
<path d="M6.5 1.2 L7.2 .5 H13 L13.5 1 V4 H6.5Z" fill="#f2d98c" stroke="#d6ae50"/>
<rect x="7.7" y="1" width="2.3" height="1.3" fill="#fff"/><rect x="10" y="1" width="2.1" height="1.3" fill="#3d8fe6"/>
<path d="M.5 2 L1 1.5 H6.3 L8 3.5 H13.5 V12.5 H.5Z" fill="url(#fg)" stroke="#dab95c"/>
<path d="M.5 12.5 H13.5 V4" fill="none" stroke="#c9a044"/>
<path d="M1.5 11.5 V2.6 H5.8" fill="none" stroke="#fbefb6" stroke-width=".9"/>
</svg>
<span class="t" style="left:671.80px;top:211px;letter-spacing:-0.385px;">Shared Folders</span>
<svg class="ic" style="left:654px;top:229px" width="14" height="13" viewBox="0 0 14 13">
<path d="M6.5 1.2 L7.2 .5 H13 L13.5 1 V4 H6.5Z" fill="#f2d98c" stroke="#d6ae50"/>
<rect x="7.7" y="1" width="2.3" height="1.3" fill="#fff"/><rect x="10" y="1" width="2.1" height="1.3" fill="#3d8fe6"/>
<path d="M.5 2 L1 1.5 H6.3 L8 3.5 H13.5 V12.5 H.5Z" fill="url(#fg)" stroke="#dab95c"/>
<path d="M.5 12.5 H13.5 V4" fill="none" stroke="#c9a044"/>
<path d="M1.5 11.5 V2.6 H5.8" fill="none" stroke="#fbefb6" stroke-width=".9"/>
</svg>
<span class="t" style="left:671.80px;top:230px;letter-spacing:-0.086px;">Start Menu and Taskbar</span>
<svg class="ic" style="left:654px;top:248px" width="14" height="13" viewBox="0 0 14 13">
<path d="M6.5 1.2 L7.2 .5 H13 L13.5 1 V4 H6.5Z" fill="#f2d98c" stroke="#d6ae50"/>
<rect x="7.7" y="1" width="2.3" height="1.3" fill="#fff"/><rect x="10" y="1" width="2.1" height="1.3" fill="#3d8fe6"/>
<path d="M.5 2 L1 1.5 H6.3 L8 3.5 H13.5 V12.5 H.5Z" fill="url(#fg)" stroke="#dab95c"/>
<path d="M.5 12.5 H13.5 V4" fill="none" stroke="#c9a044"/>
<path d="M1.5 11.5 V2.6 H5.8" fill="none" stroke="#fbefb6" stroke-width=".9"/>
</svg>
<span class="t" style="left:671.80px;top:249px;letter-spacing:-0.260px;">System</span>
<svg class="ic" style="left:654px;top:267px" width="14" height="13" viewBox="0 0 14 13">
<path d="M6.5 1.2 L7.2 .5 H13 L13.5 1 V4 H6.5Z" fill="#f2d98c" stroke="#d6ae50"/>
<rect x="7.7" y="1" width="2.3" height="1.3" fill="#fff"/><rect x="10" y="1" width="2.1" height="1.3" fill="#3d8fe6"/>
<path d="M.5 2 L1 1.5 H6.3 L8 3.5 H13.5 V12.5 H.5Z" fill="url(#fg)" stroke="#dab95c"/>
<path d="M.5 12.5 H13.5 V4" fill="none" stroke="#c9a044"/>
<path d="M1.5 11.5 V2.6 H5.8" fill="none" stroke="#fbefb6" stroke-width=".9"/>
</svg>
<span class="t" style="left:672.80px;top:268px;letter-spacing:0.012px;">Windows Components</span>
<svg class="ic" style="left:654px;top:285px" width="16" height="16" viewBox="0 0 16 16">
<path d="M5.5 1.2 L6.2 .5 H11.4 L11.9 1 V4 H5.5Z" fill="#f2d98c" stroke="#d6ae50"/>
<rect x="6.7" y="1" width="2" height="1.3" fill="#fff"/><rect x="8.6" y="1" width="2" height="1.3" fill="#3d8fe6"/>
<path d="M.5 2 L1 1.5 H5.3 L7 3.5 H11.9 V10.5 H.5Z" fill="url(#fg)" stroke="#dab95c"/>
<path d="M.5 10.5 H6" fill="none" stroke="#c9a044"/>
<path d="M5.6 4.6 H10.6 V13.4 H5.6Z" fill="#fcfcfc" stroke="#a2a2a2" stroke-width=".9"/>
<rect x="7" y="7.4" width="1.2" height="1.2" fill="#333"/>
<path d="M8.5 6.5 H13.4 L15.4 8.6 V15.4 H8.5Z" fill="#fff" stroke="#8f8f8f" stroke-width=".9"/>
<path d="M13.2 6.6 V8.8 H15.3" fill="#ededed" stroke="#9a9a9a" stroke-width=".7"/>
<rect x="10" y="9.9" width="1.2" height="1.2" fill="#222"/><rect x="10.1" y="12" width="1" height="1" fill="#8c8c8c"/>
<path d="M12 10.5H14.2M12 12.5H14.2" stroke="#5a7d7a" stroke-width="1"/>
</svg>
<span class="t" style="left:672.80px;top:287px;letter-spacing:-0.136px;">All Settings</span>
<div style="left:650px;top:506px;width:256px;height:17px;background:#fff;border:1px solid #d6d6d6"></div><div style="left:650px;top:506px;width:17px;height:17px;background:#fff;border:1px solid #c9c9c9"></div><div style="left:889px;top:506px;width:17px;height:17px;background:#fff;border:1px solid #c9c9c9"></div><svg class="ic" style="left:655px;top:510px" width="6" height="9" viewBox="0 0 6 9"><path d="M5 .7 L1.2 4.5 L5 8.3" fill="none" stroke="#555" stroke-width="1.3"/></svg><svg class="ic" style="left:895px;top:510px" width="6" height="9" viewBox="0 0 6 9"><path d="M1 .7 L4.8 4.5 L1 8.3" fill="none" stroke="#555" stroke-width="1.3"/></svg><div style="left:667px;top:506px;width:87px;height:17px;background:#dadada;border:1px solid #a6a6a6"></div><div style="left:706px;top:511px;width:2px;height:7px;background:#5a5a5a"></div><div style="left:709px;top:511px;width:2px;height:7px;background:#5a5a5a"></div><div style="left:712px;top:511px;width:2px;height:7px;background:#5a5a5a"></div>
<div style="left:433px;top:523px;width:4px;height:21px;background:#f0f0f0"></div>
<div style="left:436px;top:526px;width:472px;height:18px;background:#f0f0f0"></div>
<svg class="ic" style="left:436px;top:524px" width="472" height="21" viewBox="0 0 472 21">
<path d="M0 0 H1 L9.5 20 H0Z" fill="#f0f0f0"/>
<path d="M71.5 1.5 H472" stroke="#696969" stroke-width="1"/>
<path d="M63.4 1.5 L73 19.5 H125.7 L133.6 1.5Z" fill="#f0f0f0" stroke="#5c5c5c" stroke-width="1"/>
<path d="M1 0 H72 V2 L65 19.5 H9.5Z" fill="#fff"/>
<path d="M0 .5 L9 19.5 M65 19.5 L71.7 1.5" stroke="#505050" stroke-width="1" fill="none"/>
</svg>
<span class="t" style="left:447.60px;top:528px;letter-spacing:-0.314px;">Extended</span>
<span class="t" style="left:511.40px;top:528px;letter-spacing:-0.143px;">Standard</span>
<div style="left:10px;top:544px;width:898px;height:23px;background:#fff;border-top:1px solid #a0a0a0;border-bottom:1px solid #a3a0a0;border-left:1px solid #a3a0a0"></div>
<div style="left:906px;top:545px;width:2px;height:21px;background:#f0f0f0"></div>
<div style="left:687px;top:546px;width:1px;height:20px;background:#c8c8c8"></div>
<div style="left:820px;top:546px;width:1px;height:20px;background:#c8c8c8"></div>
<div style="left:905px;top:546px;width:1px;height:20px;background:#c8c8c8"></div>
</body></html>
